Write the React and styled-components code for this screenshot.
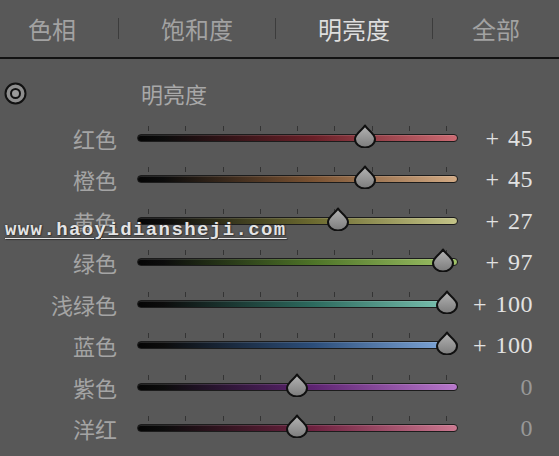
import React from "react";
import styled, { createGlobalStyle } from "styled-components";

const GlobalStyle = createGlobalStyle`
  html, body {
    margin: 0;
    padding: 0;
    background: #585858;
  }
  * {
    box-sizing: border-box;
  }
`;

const Panel = styled.div`
  position: relative;
  width: 559px;
  height: 456px;
  overflow: hidden;
  background: #585858;
  font-family: "Noto Sans CJK SC", "Noto Sans", sans-serif;
`;

const Header = styled.div`
  display: flex;
  align-items: center;
  height: 59px;
  border-bottom: 2px solid #121212;
`;

const Tab = styled.div`
  width: ${({ width }) => width}px;
  padding-right: ${({ shift }) => shift || 0}px;
  text-align: center;
  font-size: 24px;
  line-height: 1;
  color: ${({ active }) => (active ? "#dedede" : "#a2a2a2")};
`;

const TabDivider = styled.div`
  width: 1px;
  height: 21px;
  background: #3c3c3c;
`;

const SubHeader = styled.div`
  display: flex;
  align-items: center;
  height: 58px;
  padding: 10px 0 0 4px;
`;

const Title = styled.div`
  margin-left: 114px;
  font-size: 22px;
  line-height: 1;
  color: #a8a8a8;
`;

const Rows = styled.div`
  display: flex;
  flex-direction: column;
`;

const Row = styled.div`
  display: grid;
  grid-template-columns: 137px 321px 75px;
  align-items: center;
  height: 41.5px;
`;

const Label = styled.div`
  padding-right: 20px;
  text-align: right;
  font-size: 22px;
  line-height: 1;
  color: #a4a4a4;
`;

const TrackArea = styled.div`
  position: relative;
  height: 100%;
  display: flex;
  flex-direction: column;
  justify-content: center;
  gap: 3px;
  padding-bottom: 8px;
`;

const Ticks = styled.div`
  display: flex;
  justify-content: space-between;
  height: 5px;
  padding: 0 11px;
`;

const Tick = styled.span`
  width: 1px;
  height: 5px;
  background: #343434;
`;

const Bar = styled.div`
  height: 8px;
  border-radius: 4px;
  border: 1px solid #1c1c1c;
  background: linear-gradient(90deg, #050505 0%, #0c0c0c 8%, ${({ mid }) => mid} 55%, ${({ end }) => end} 100%);
  box-shadow: inset 0 1px 0 rgba(255, 255, 255, 0.12);
`;

const Thumb = styled.svg`
  position: absolute;
  top: 50%;
  margin-top: -14px;
  width: 22px;
  height: 24px;
`;

const Value = styled.div`
  text-align: right;
  font-family: "Liberation Serif", "DejaVu Serif", serif;
  font-size: 24px;
  letter-spacing: 0.5px;
  word-spacing: 2px;
  line-height: 1;
  color: ${({ zero }) => (zero ? "#989898" : "#e2e2e2")};
`;

const Watermark = styled.div`
  position: absolute;
  left: 5px;
  top: 221px;
  font-family: "Liberation Mono", "DejaVu Sans Mono", monospace;
  font-weight: bold;
  font-size: 19px;
  letter-spacing: 1.4px;
  line-height: 19px;
  color: #e4e4e4;
  text-decoration: underline;
  text-underline-offset: 3px;
  text-shadow: 0 0 2px #2a2a2a, 1px 1px 1px #3a3a3a;
`;

const tabs = [
  { label: "色相", width: 118, shift: 14 },
  { label: "饱和度", width: 156 },
  { label: "明亮度", width: 156, active: true },
  { label: "全部", width: 126 },
];

const sliders = [
  { label: "红色", value: 45, mid: "#6a2028", end: "#cc6a72" },
  { label: "橙色", value: 45, mid: "#7a5232", end: "#d2aa84" },
  { label: "黄色", value: 27, mid: "#6c6a30", end: "#c4c488" },
  { label: "绿色", value: 97, mid: "#4e7428", end: "#a0c468" },
  { label: "浅绿色", value: 100, mid: "#2c6a5e", end: "#80c8b6" },
  { label: "蓝色", value: 100, mid: "#2c4e7a", end: "#86aee0" },
  { label: "紫色", value: 0, mid: "#5e2472", end: "#b878cc" },
  { label: "洋红", value: 0, mid: "#6e2240", end: "#cc7890" },
];

function TargetIcon() {
  return (
    <svg width="23" height="23" viewBox="0 0 23 23">
      <circle cx="11.5" cy="11.5" r="10" fill="#8e8e8e" stroke="#111" strokeWidth="2" />
      <circle cx="11.5" cy="11.5" r="4.5" fill="#9a9a9a" stroke="#111" strokeWidth="2" />
    </svg>
  );
}

function Slider({ label, value, mid, end }) {
  const left = 10 + (value + 100) * 1.5 - 11;
  const id = `g-${label}`;
  return (
    <Row>
      <Label>{label}</Label>
      <TrackArea>
        <Ticks>
          {Array.from({ length: 9 }).map((_, i) => (
            <Tick key={i} />
          ))}
        </Ticks>
        <Bar mid={mid} end={end} />
        <Thumb viewBox="0 0 22 24" style={{ left }}>
          <defs>
            <linearGradient id={id} x1="0" y1="0" x2="0" y2="1">
              <stop offset="0" stopColor="#b4b4b4" />
              <stop offset="1" stopColor="#7c7c7c" />
            </linearGradient>
          </defs>
          <path
            d="M11 1.5 C13 5.5 21 9.5 21 15 A10 8.5 0 0 1 1 15 C1 9.5 9 5.5 11 1.5 Z"
            fill={`url(#${id})`}
            stroke="#101010"
            strokeWidth="2"
            strokeLinejoin="round"
          />
        </Thumb>
      </TrackArea>
      <Value zero={value === 0}>{value === 0 ? "0" : `+ ${value}`}</Value>
    </Row>
  );
}

export default function App() {
  return (
    <Panel>
      <GlobalStyle />
      <Header>
        {tabs.map((t, i) => (
          <React.Fragment key={t.label}>
            {i > 0 && <TabDivider />}
            <Tab width={t.width} shift={t.shift} active={t.active}>
              {t.label}
            </Tab>
          </React.Fragment>
        ))}
      </Header>
      <SubHeader>
        <TargetIcon />
        <Title>明亮度</Title>
      </SubHeader>
      <Rows>
        {sliders.map((s) => (
          <Slider key={s.label} {...s} />
        ))}
      </Rows>
      <Watermark>www.haoyidiansheji.com</Watermark>
    </Panel>
  );
}
